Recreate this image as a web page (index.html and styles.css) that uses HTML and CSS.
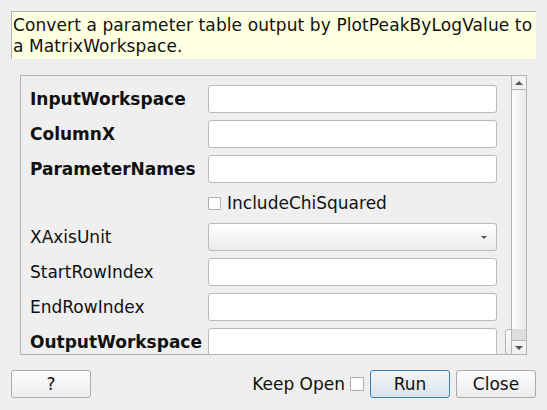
FILE: index.html
```html
<!DOCTYPE html>
<html>
<head>
<meta charset="utf-8">
<link rel="stylesheet" href="styles.css">
</head>
<body>
<div class="dialog">
  <div class="desc">Convert a parameter table output by PlotPeakByLogValue to a MatrixWorkspace.</div>
  <div class="panel">
    <div class="viewport">
      <div class="form">
        <div class="row"><span class="label bold">InputWorkspace</span><input class="field" type="text"></div>
        <div class="row"><span class="label bold">ColumnX</span><input class="field" type="text"></div>
        <div class="row"><span class="label bold">ParameterNames</span><input class="field" type="text"></div>
        <div class="row check-row"><span class="label"></span><span class="checkbox"></span><span class="check-text">IncludeChiSquared</span></div>
        <div class="row"><span class="label">XAxisUnit</span><div class="combo"><span class="combo-arrow"></span></div></div>
        <div class="row"><span class="label">StartRowIndex</span><input class="field" type="text"></div>
        <div class="row"><span class="label">EndRowIndex</span><input class="field" type="text"></div>
        <div class="row"><span class="label bold">OutputWorkspace</span><input class="field" type="text"><span class="mini-btn"></span></div>
      </div>
    </div>
    <div class="scrollbar">
      <div class="sb-btn sb-up"><span class="arrow-up"></span></div>
      <div class="sb-handle"></div>
      <div class="sb-track"></div>
      <div class="sb-btn sb-down"><span class="arrow-down"></span></div>
    </div>
  </div>
  <div class="buttons">
    <button class="btn">?</button>
    <div class="spacer"></div>
    <span class="keep-text">Keep Open</span>
    <span class="checkbox keep-box"></span>
    <button class="btn btn-run">Run</button>
    <button class="btn btn-close">Close</button>
  </div>
</div>
</body>
</html>
```

FILE: styles.css
```css
html, body {
  margin: 0;
  padding: 0;
  background: #efefef;
}
body {
  font-family: "DejaVu Sans", "Liberation Sans", sans-serif;
  font-size: 17px;
  color: #111111;
}
.dialog {
  width: 547px;
  height: 410px;
  box-sizing: border-box;
  padding: 11px;
  display: flex;
  flex-direction: column;
}
.desc {
  background: #ffffe1;
  border-top: 1px solid #b4b4b4;
  border-left: 1px solid #b4b4b4;
  height: 48px;
  box-sizing: border-box;
  padding: 3px 2px 0 1px;
  line-height: 21px;
  letter-spacing: 0.1px;
}
.panel {
  margin: 16px 9px 0 9px;
  height: 280px;
  box-sizing: border-box;
  border: 1px solid #b4b4b4;
  display: flex;
}
.viewport {
  width: 491px;
  height: 278px;
  overflow: hidden;
}
.form {
  padding: 9px 0 0 9px;
  display: flex;
  flex-direction: column;
  gap: 7px;
}
.row {
  display: flex;
  align-items: center;
  height: 28px;
  flex-shrink: 0;
}
.check-row {
  height: 26px;
}
.label {
  width: 178px;
  flex-shrink: 0;
  white-space: nowrap;
}
.bold {
  font-weight: bold;
}
.field {
  width: 289px;
  height: 28px;
  box-sizing: border-box;
  border: 1px solid #bababa;
  border-radius: 3px;
  background: #ffffff;
  margin: 0;
  padding: 0 4px;
  font: inherit;
  flex-shrink: 0;
}
.combo {
  width: 289px;
  height: 28px;
  box-sizing: border-box;
  border: 1px solid #bababa;
  border-radius: 3px;
  background: linear-gradient(#ffffff, #ececec);
  display: flex;
  align-items: center;
  justify-content: flex-end;
  padding-right: 9px;
  flex-shrink: 0;
}
.combo-arrow {
  width: 0;
  height: 0;
  border-left: 3px solid transparent;
  border-right: 3px solid transparent;
  border-top: 3px solid #555;
}
.checkbox {
  width: 13px;
  height: 13px;
  box-sizing: border-box;
  border: 1px solid #b0b0b0;
  background: #ffffff;
  border-radius: 1px;
  flex-shrink: 0;
}
.check-text {
  margin-left: 6px;
}
.mini-btn {
  margin-left: 8px;
  width: 20px;
  height: 26px;
  box-sizing: border-box;
  border: 1px solid #b4b4b4;
  border-radius: 3px;
  background: linear-gradient(#fdfdfd, #ededed);
  flex-shrink: 0;
}
.scrollbar {
  width: 14px;
  border-left: 1px solid #b4b4b4;
  display: flex;
  flex-direction: column;
}
.sb-btn {
  height: 13px;
  background: #f2f2f2;
  display: flex;
  align-items: center;
  justify-content: center;
  flex-shrink: 0;
}
.sb-up {
  border-bottom: 1px solid #b4b4b4;
}
.sb-down {
  border-top: 1px solid #b4b4b4;
}
.arrow-up {
  width: 0;
  height: 0;
  border-left: 4px solid transparent;
  border-right: 4px solid transparent;
  border-bottom: 4px solid #555;
}
.arrow-down {
  width: 0;
  height: 0;
  border-left: 4px solid transparent;
  border-right: 4px solid transparent;
  border-top: 4px solid #555;
}
.sb-handle {
  flex: 1;
  background: linear-gradient(to right, #fdfdfd, #e9e9e9);
}
.sb-track {
  height: 11px;
  background: #dedede;
}
.buttons {
  margin-top: 15px;
  display: flex;
  align-items: center;
  height: 28px;
}
.spacer {
  flex: 1;
}
.btn {
  width: 80px;
  height: 28px;
  box-sizing: border-box;
  border: 1px solid #ababab;
  border-radius: 3px;
  background: linear-gradient(#fdfdfd, #ececec);
  font: inherit;
  color: #111111;
  padding: 0;
  margin: 0;
}
.keep-text {
  margin-right: 5px;
}
.keep-box {
  width: 14px;
  height: 14px;
  margin-right: 6px;
}
.btn-run {
  border-color: #3c7fb1;
  background: linear-gradient(#f0f4f7, #dbe4ec);
  margin-right: 6px;
}
```
